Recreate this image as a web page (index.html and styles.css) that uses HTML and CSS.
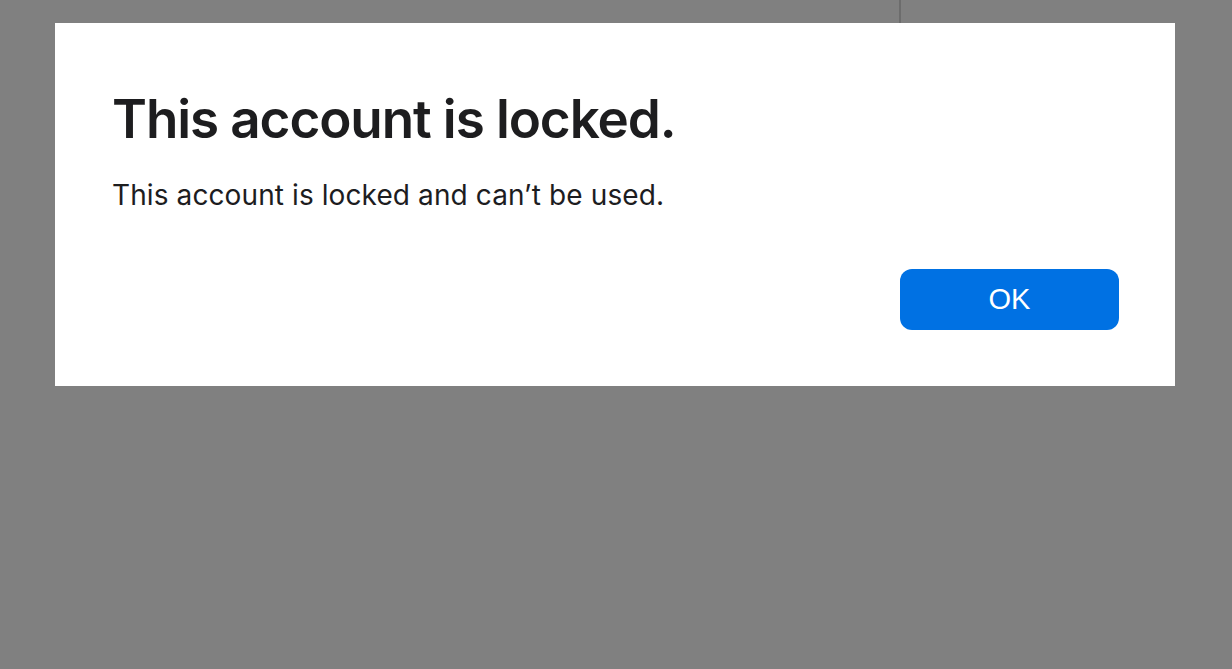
FILE: index.html
```html
<!DOCTYPE html>
<html lang="en">
<head>
<meta charset="utf-8">
<title>This account is locked.</title>
<link rel="stylesheet" href="styles.css">
</head>
<body>
<div class="backdrop">
  <div class="topline"></div>
  <div class="dialog" role="alertdialog">
    <h1 class="title">This account is locked.</h1>
    <p class="message">This account is locked and can’t be used.</p>
    <div class="actions">
      <button class="ok" type="button">OK</button>
    </div>
  </div>
</div>
</body>
</html>
```
FILE: styles.css
```css
html, body {
  margin: 0;
  padding: 0;
  height: 100%;
}
body {
  background: #808080;
  font-family: Inter, "Noto Sans", sans-serif;
  overflow: hidden;
}
.backdrop {
  position: relative;
  height: 100%;
  padding: 23px 57px 0 55px;
  box-sizing: border-box;
}
.topline {
  position: absolute;
  left: 899px;
  top: 0;
  width: 2px;
  height: 23px;
  background: #6c6c6c;
}
.dialog {
  background: #ffffff;
  height: 363px;
  box-sizing: border-box;
  padding: 66px 56px 0 57px;
  display: flex;
  flex-direction: column;
}
.title {
  margin: 0;
  font-size: 53px;
  font-weight: 600;
  letter-spacing: -1.1px;
  line-height: 60px;
  color: #1d1d1f;
}
.message {
  margin: 29px 0 0;
  font-size: 28px;
  font-weight: 400;
  letter-spacing: 0.1px;
  line-height: 34px;
  color: #1d1d1f;
}
.actions {
  display: flex;
  justify-content: flex-end;
  margin-top: 57px;
}
.ok {
  width: 219px;
  height: 61px;
  padding: 0;
  border: 0;
  border-radius: 12px;
  background: #0071e3;
  color: #ffffff;
  font-family: "Liberation Sans", Arial, sans-serif;
  font-size: 29px;
  cursor: pointer;
}
```
